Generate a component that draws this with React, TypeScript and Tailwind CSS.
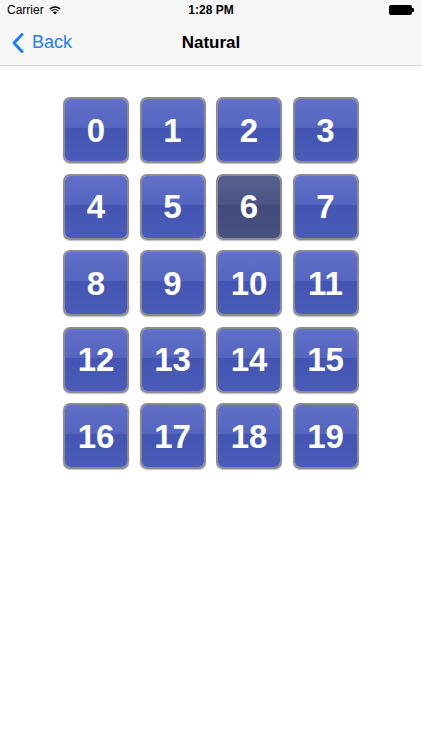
import type { FC } from 'react';

const numbers = Array.from({ length: 20 }, (_, i) => i);

const Tile: FC<{ n: number; selected?: boolean }> = ({ n, selected }) => {
    return (
        <div className="w-[66px] h-[66px] rounded-[7px] border-2 border-[#8c8c90] shadow-[0_1px_1px_rgba(0,0,0,0.25)] overflow-hidden relative">
            {/* glossy halves */}
            {selected ? (
                <div className="absolute inset-0 flex flex-col">
                    <div className="h-[47%] bg-gradient-to-b from-[#56608f] to-[#4b5585]"></div>
                    <div className="flex-1 bg-gradient-to-b from-[#414a7b] to-[#48517f]"></div>
                </div>
            ) : (
                <div className="absolute inset-0 flex flex-col">
                    <div className="h-[47%] bg-gradient-to-b from-[#6170c8] to-[#5465c0]"></div>
                    <div className="flex-1 bg-gradient-to-b from-[#4354b2] to-[#4a5cb8]"></div>
                </div>
            )}
            <div className="absolute inset-0 flex items-center justify-center text-white text-[33px] font-bold leading-none font-['Liberation_Sans',Arial,sans-serif]">
                {n}
            </div>
        </div>
    );
};

const App: FC = () => {
    return (
        <main className="w-[422px] h-[750px] bg-white font-['Liberation_Sans',Arial,sans-serif]">
            {/* status bar + nav */}
            <header className="bg-[#f7f7f7] border-b border-[#d6d6d9]">
                <div className="h-[20px] flex items-center justify-between px-[7px] relative text-[12px] text-black">
                    <div className="flex items-center gap-[5px]">
                        <span>Carrier</span>
                        <svg width="12" height="9" viewBox="0 0 12 9">
                            <path d="M6 8.6 L8 6.4 A3 3 0 0 0 4 6.4 Z" fill="black" />
                            <path d="M2.6 5 A4.9 4.9 0 0 1 9.4 5" stroke="black" strokeWidth="1.4" fill="none" />
                            <path d="M0.8 3.1 A7.4 7.4 0 0 1 11.2 3.1" stroke="black" strokeWidth="1.4" fill="none" />
                        </svg>
                    </div>
                    <span className="absolute left-1/2 -translate-x-1/2 font-bold">1:28 PM</span>
                    <div className="flex items-center mr-[1px]">
                        <div className="w-[23px] h-[10px] bg-black rounded-[2px]"></div>
                        <div className="w-[2px] h-[4px] bg-black rounded-r-[1px]"></div>
                    </div>
                </div>
                <div className="h-[45px] flex items-center relative">
                    <div className="flex items-center text-[#1b7ffa] text-[18px] pl-[12px] gap-[8px]">
                        <svg width="12" height="20" viewBox="0 0 12 20">
                            <path d="M10 1.5 L2 10 L10 18.5" stroke="#1b7ffa" strokeWidth="3" fill="none" strokeLinecap="round" strokeLinejoin="round" />
                        </svg>
                        <span>Back</span>
                    </div>
                    <span className="absolute left-1/2 -translate-x-1/2 text-[17px] font-bold text-black">Natural</span>
                </div>
            </header>

            {/* number grid */}
            <section className="pt-[31px] pl-[63px]">
                <div className="grid grid-cols-[repeat(4,66px)] gap-x-[10.5px] gap-y-[10.5px]">
                    {numbers.map((n) => (
                        <Tile key={n} n={n} selected={n === 6} />
                    ))}
                </div>
            </section>
        </main>
    );
};

export default App;
